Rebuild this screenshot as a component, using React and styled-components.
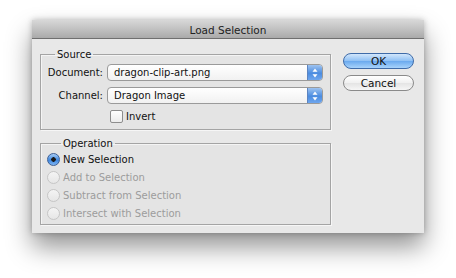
import React from "react";
import styled, { createGlobalStyle } from "styled-components";

const Global = createGlobalStyle`
  html, body {
    margin: 0;
    padding: 0;
    background: #ffffff;
  }
  body {
    font-family: "DejaVu Sans", "Liberation Sans", sans-serif;
    font-size: 10px;
    color: #111;
  }
`;

const Page = styled.div`
  width: 456px;
  height: 278px;
  padding: 20px 0 0 32px;
  box-sizing: border-box;
`;

const Window = styled.div`
  width: 392px;
  height: 213px;
  background: #e8e8e8;
  box-shadow: 0 14px 24px rgba(0, 0, 0, 0.42), 0 0 6px rgba(0, 0, 0, 0.25);
  display: flex;
  flex-direction: column;
`;

const TitleBar = styled.div`
  height: 17px;
  flex: none;
  background: linear-gradient(#d8d8d8, #aaaaaa);
  border-bottom: 1px solid #6f6f6f;
  display: flex;
  align-items: center;
  justify-content: center;
  font-size: 10.5px;
  color: #222;
  padding-top: 1px;
`;

const Body = styled.div`
  display: flex;
  padding: 9px 8px 0 8px;
  gap: 12px;
`;

const LeftColumn = styled.div`
  width: 291px;
  display: flex;
  flex-direction: column;
  gap: 7px;
`;

const Group = styled.fieldset`
  margin: 0;
  padding: ${(p) => p.$pad};
  border: 1px solid #a4a4a4;
  box-shadow: inset 1px 1px 0 #f4f4f4, 1px 1px 0 #f6f6f6;
  background: #e4e4e4;
  height: ${(p) => p.$h}px;
  box-sizing: border-box;
  legend {
    margin-left: 14px;
    padding: 0 2px;
    line-height: 13px;
  }
`;

const FormGrid = styled.div`
  display: grid;
  grid-template-columns: 62px 1fr;
  column-gap: 4px;
  row-gap: 6px;
  align-items: center;
`;

const Label = styled.span`
  text-align: right;
`;

const SelectBox = styled.div`
  height: 17px;
  box-sizing: border-box;
  border: 1px solid #9a9a9a;
  border-radius: 4px;
  background: linear-gradient(#ffffff, #f1f1f1);
  display: flex;
  align-items: center;
  padding-left: 6px;
  position: relative;
  overflow: hidden;
`;

const Arrows = styled.div`
  position: absolute;
  right: 0;
  top: 0;
  bottom: 0;
  width: 14px;
  border-left: 1px solid #5d84c0;
  background: linear-gradient(#9ec3f0, #4b8ce0 55%, #6ea6ee);
  display: flex;
  align-items: center;
  justify-content: center;
`;

const CheckRow = styled.label`
  grid-column: 2;
  display: flex;
  align-items: center;
  gap: 3px;
  margin-left: 3px;
  height: 12px;
`;

const Checkbox = styled.span`
  width: 11px;
  height: 11px;
  border: 1px solid #8d8d8d;
  border-radius: 2px;
  background: linear-gradient(#ffffff, #ececec);
`;

const RadioList = styled.div`
  display: flex;
  flex-direction: column;
  gap: 4px;
`;

const RadioRow = styled.div`
  display: flex;
  align-items: center;
  gap: 3px;
  height: 14px;
  color: ${(p) => (p.$disabled ? "#9c9c9c" : "#111")};
`;

const Radio = styled.span`
  width: 13px;
  height: 13px;
  box-sizing: border-box;
  border-radius: 50%;
  border: 1px solid ${(p) => (p.$on ? "#3d5f94" : "#c6c6c6")};
  background: ${(p) =>
    p.$on
      ? "radial-gradient(circle, #1a1a1a 0 2px, transparent 2.5px), linear-gradient(#a8cdf6, #3d87e0 55%, #7fb5f2)"
      : "linear-gradient(#f4f4f4, #e6e6e6)"};
`;

const ButtonColumn = styled.div`
  display: flex;
  flex-direction: column;
  gap: 6px;
  padding-top: 5px;
`;

const Button = styled.button`
  width: 71px;
  height: 16px;
  box-sizing: border-box;
  border-radius: 8px;
  font-family: inherit;
  font-size: 10.5px;
  padding: 0;
  line-height: 14px;
  color: #111;
  border: 1px solid ${(p) => (p.$primary ? "#3f6ba8" : "#8a8a8a")};
  background: ${(p) =>
    p.$primary
      ? "linear-gradient(#d2e6fb, #8ec0f4 50%, #6aa9ee 51%, #a8d3fb)"
      : "linear-gradient(#ffffff, #f0f0f0 50%, #e4e4e4 51%, #f6f6f6)"};
`;

const Updown = () => (
  <svg width="6" height="10" viewBox="0 0 6 10">
    <path d="M3 0.5 L5.5 3.8 H0.5 Z" fill="#fff" />
    <path d="M3 9.5 L5.5 6.2 H0.5 Z" fill="#fff" />
  </svg>
);

const Select = ({ value }) => (
  <SelectBox>
    {value}
    <Arrows>
      <Updown />
    </Arrows>
  </SelectBox>
);

const operations = [
  { label: "New Selection", on: true },
  { label: "Add to Selection" },
  { label: "Subtract from Selection" },
  { label: "Intersect with Selection" },
];

export default function App() {
  return (
    <Page>
      <Global />
      <Window>
        <TitleBar>Load Selection</TitleBar>
        <Body>
          <LeftColumn>
            <Group $h={82} $pad="3px 7px 6px 0">
              <legend>Source</legend>
              <FormGrid>
                <Label>Document:</Label>
                <Select value="dragon-clip-art.png" />
                <Label>Channel:</Label>
                <Select value="Dragon Image" />
                <CheckRow>
                  <Checkbox />
                  Invert
                </CheckRow>
              </FormGrid>
            </Group>
            <Group $h={88} $pad="2px 7px 4px 6px">
              <legend>Operation</legend>
              <RadioList>
                {operations.map((o) => (
                  <RadioRow key={o.label} $disabled={!o.on}>
                    <Radio $on={o.on} />
                    {o.label}
                  </RadioRow>
                ))}
              </RadioList>
            </Group>
          </LeftColumn>
          <ButtonColumn>
            <Button $primary>OK</Button>
            <Button>Cancel</Button>
          </ButtonColumn>
        </Body>
      </Window>
    </Page>
  );
}
